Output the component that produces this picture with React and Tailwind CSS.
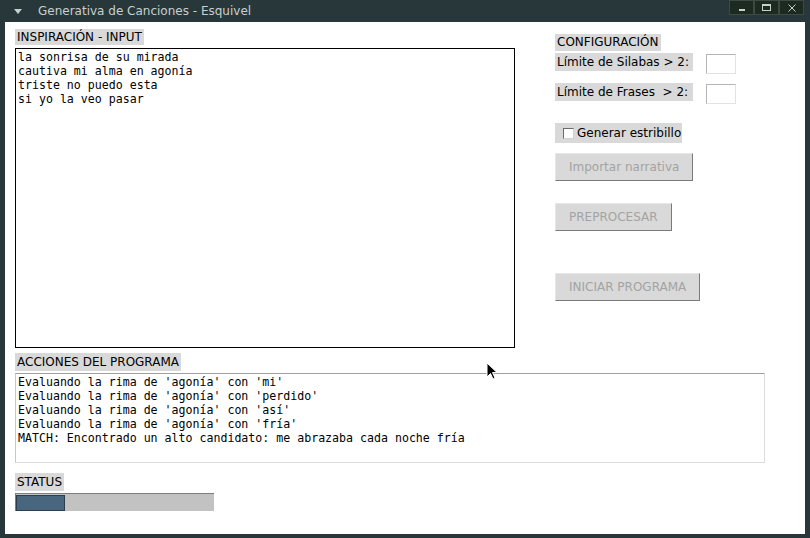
import React from 'react';

const sans = "font-['DejaVu_Sans',sans-serif]";
const mono = "font-['DejaVu_Sans_Mono',monospace]";

const Label = ({ children, w = 'w-fit', className = '' }) => (
    <div className={`${w} bg-[#d9d9d9] px-[2px] text-[12px] text-black whitespace-pre ${className}`}>{children}</div>
);

const Button = ({ children }) => (
    <div className="w-fit border border-t-[#e6e6e6] border-l-[#e6e6e6] border-b-[#7a7a7a] border-r-[#7a7a7a] bg-[#d9d9d9] h-[28px] px-[13px] flex items-center text-[12px] text-[#a3a3a3]">
        {children}
    </div>
);

const Entry = () => (
    <div className="w-[30px] h-[20px] bg-white border border-t-[#b5b5b5] border-l-[#b5b5b5] border-b-[#e2e2e2] border-r-[#e2e2e2]" />
);

const lyrics = ['la sonrisa de su mirada', 'cautiva mi alma en agonía', 'triste no puedo esta', 'si yo la veo pasar'];

const log = [
    "Evaluando la rima de 'agonía' con 'mi'",
    "Evaluando la rima de 'agonía' con 'perdido'",
    "Evaluando la rima de 'agonía' con 'así'",
    "Evaluando la rima de 'agonía' con 'fría'",
    'MATCH: Encontrado un alto candidato: me abrazaba cada noche fría',
];

export default function App() {
    return (
        <div className={`relative w-[810px] h-[538px] bg-[#28373a] flex flex-col overflow-hidden ${sans}`}>
            {/* Title bar */}
            <div className="h-[22px] flex items-start">
                <div className="w-[34px] h-[22px] flex items-center justify-center">
                    <svg width="8" height="5" viewBox="0 0 8 5" className="ml-[1px]">
                        <path d="M0 0 L8 0 L4 5 Z" fill="#c5d0cf" />
                    </svg>
                </div>
                <div className="mt-[3px] ml-[4px] text-[12px] leading-[16px] text-[#c7cfcf]">Generativa de Canciones - Esquivel</div>
                <div className="ml-auto mr-[6px] flex">
                    {['min', 'max', 'close'].map(k => (
                        <div key={k} className="w-[25px] h-[15px] bg-[#1c2a20] border border-[#3b4a44] flex items-center justify-center">
                            {k === 'min' && <div className="w-[6px] h-[2px] bg-[#c5d0cf] mt-[5px]" />}
                            {k === 'max' && <div className="w-[9px] h-[7px] border border-t-2 border-[#c5d0cf]" />}
                            {k === 'close' && (
                                <svg width="8" height="8" viewBox="0 0 8 8">
                                    <path d="M0.5 0.5 L7.5 7.5 M7.5 0.5 L0.5 7.5" stroke="#c5d0cf" strokeWidth="1" />
                                </svg>
                            )}
                        </div>
                    ))}
                </div>
            </div>

            {/* Client area */}
            <div className="mx-[5px] h-[512px] bg-white pl-[10px] pt-[7px]">
                <div className="flex">
                    <div className="w-[500px]">
                        <Label className="h-[16px] leading-[16px]">INSPIRACIÓN - INPUT</Label>
                        <div className={`mt-[3px] h-[300px] border border-black px-[2px] pt-[1px] text-[11.6px] leading-[14px] text-black ${mono}`}>
                            {lyrics.map(l => <div key={l}>{l}</div>)}
                        </div>
                    </div>

                    <div className="ml-[40px] pt-[5px] flex flex-col">
                        <Label className="h-[17px] leading-[17px]">CONFIGURACIÓN</Label>
                        <div className="mt-[2px] flex items-start gap-[13px]">
                            <Label w="w-[138px]" className="h-[18px] leading-[18px] overflow-hidden">Límite de Silabas &gt; 2:</Label>
                            <div className="mt-[1px]"><Entry /></div>
                        </div>
                        <div className="mt-[9px] flex items-start gap-[13px]">
                            <Label w="w-[138px]" className="h-[18px] leading-[18px] overflow-hidden">Límite de Frases  &gt; 2:</Label>
                            <div className="mt-[1px]"><Entry /></div>
                        </div>
                        <div className="mt-[19px] w-[127px] h-[20px] bg-[#d9d9d9] flex items-center pl-[8px] gap-[3px] text-[12px] whitespace-nowrap overflow-hidden">
                            <div className="shrink-0 w-[11px] h-[11px] bg-white border border-t-[#6b6b6b] border-l-[#6b6b6b] border-b-[#d0d0d0] border-r-[#d0d0d0]" />
                            <span>Generar estribillo</span>
                        </div>
                        <div className="mt-[10px]"><Button>Importar narrativa</Button></div>
                        <div className="mt-[22px]"><Button>PREPROCESAR</Button></div>
                        <div className="mt-[42px]"><Button>INICIAR PROGRAMA</Button></div>
                    </div>
                </div>

                <Label className="mt-[5px] h-[18px] leading-[18px]">ACCIONES DEL PROGRAMA</Label>
                <div className={`mt-[2px] w-[750px] h-[90px] border border-t-[#a0a0a0] border-l-[#c8c8c8] border-b-[#dcdcdc] border-r-[#dcdcdc] px-[2px] pt-[1px] text-[11.6px] leading-[14px] text-black ${mono}`}>
                    {log.map(l => <div key={l} className="whitespace-pre">{l}</div>)}
                </div>

                <Label className="mt-[10px] h-[18px] leading-[18px]">STATUS</Label>
                <div className="mt-[2px] w-[199px] h-[18px] bg-[#c2c2c2] border-t border-l border-[#7d7d7d] pt-[1px] flex">
                    <div className="w-[49px] h-[16px] bg-[#48677f] border border-[#2c3e4e]" />
                </div>
            </div>

            {/* Mouse pointer */}
            <svg className="absolute left-[486px] top-[362px]" width="12" height="19" viewBox="0 0 12 19">
                <path d="M1 1 L1 15 L4.5 11.5 L7 17 L9 16 L6.5 10.5 L11 10.5 Z" fill="#000" stroke="#fff" strokeWidth="1" />
            </svg>
        </div>
    );
}
